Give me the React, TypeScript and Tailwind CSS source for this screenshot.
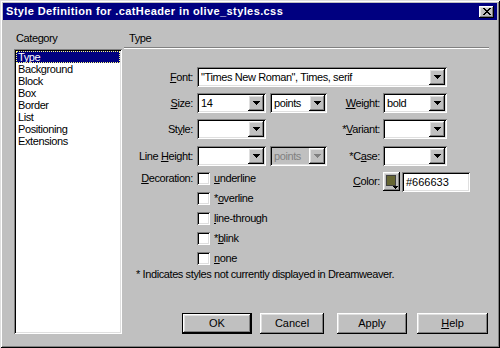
import type { ReactNode } from "react";

const sunken =
  "shadow-[inset_1px_1px_0_#808080,inset_-1px_-1px_0_#ffffff,inset_2px_2px_0_#000000,inset_-2px_-2px_0_#dfdfdf]";
const raised =
  "shadow-[inset_-1px_-1px_0_#000000,inset_1px_1px_0_#ffffff,inset_-2px_-2px_0_#808080,inset_2px_2px_0_#dfdfdf]";

function Arrow({ disabled }: { disabled?: boolean }) {
  const c = disabled ? "#808080" : "#000000";
  return (
    <svg width="7" height="4" viewBox="0 0 7 4" shapeRendering="crispEdges">
      <rect x="0" y="0" width="7" height="1" fill={c} />
      <rect x="1" y="1" width="5" height="1" fill={c} />
      <rect x="2" y="2" width="3" height="1" fill={c} />
      <rect x="3" y="3" width="1" height="1" fill={c} />
    </svg>
  );
}

// underlined access key
function U({ children }: { children: ReactNode }) {
  return <span className="underline underline-offset-[1px]">{children}</span>;
}

function Select({
  value,
  className,
  disabled,
}: {
  value?: string;
  className: string;
  disabled?: boolean;
}) {
  return (
    <div
      className={`flex h-[20px] p-[2px] ${disabled ? "bg-[#c0c0c0]" : "bg-white"} ${sunken} ${className}`}
    >
      <span
        className={`flex-1 pl-[2px] leading-[16px] whitespace-nowrap overflow-hidden ${disabled ? "text-[#808080]" : "text-black"}`}
      >
        {value}
      </span>
      <span
        className={`w-[16px] h-[16px] flex items-center justify-center bg-[#c0c0c0] ${raised}`}
      >
        <Arrow disabled={disabled} />
      </span>
    </div>
  );
}

function Label({ children, className }: { children: ReactNode; className: string }) {
  return (
    <div className={`text-right leading-[20px] whitespace-nowrap ${className}`}>{children}</div>
  );
}

function Check({ children }: { children: ReactNode }) {
  return (
    <div className="flex items-center h-[13px]">
      <span className={`w-[13px] h-[13px] bg-white ${sunken}`} />
      <span className="ml-[4px] leading-[13px]">{children}</span>
    </div>
  );
}

function Button({ children, className, isDefault }: { children: ReactNode; className: string; isDefault?: boolean }) {
  return (
    <div className={`h-[21px] ${isDefault ? "border border-black" : ""} ${className}`}>
      <div className={`h-full flex items-center justify-center bg-[#c0c0c0] ${raised}`}>
        {children}
      </div>
    </div>
  );
}

const categories = [
  "Type",
  "Background",
  "Block",
  "Box",
  "Border",
  "List",
  "Positioning",
  "Extensions",
];

export default function App() {
  return (
    <div className="w-[500px] h-[348px] bg-[#c0c0c0] text-[11px] tracking-[-0.4px] text-black font-['Liberation_Sans',Arial,sans-serif] p-[3px] flex flex-col shadow-[inset_1px_1px_0_#dfdfdf,inset_-1px_-1px_0_#000000,inset_2px_2px_0_#ffffff,inset_-2px_-2px_0_#808080]">
      {/* title bar */}
      <div className="h-[17px] bg-[#000080] flex items-center pl-[3px] pr-[3px]">
        <span className="text-white font-bold text-[11px] tracking-[0.4px] flex-1">
          Style Definition for .catHeader in olive_styles.css
        </span>
        <span className={`w-[15px] h-[12px] bg-[#c0c0c0] flex items-center justify-center ${raised}`}>
          <svg width="8" height="7" viewBox="0 0 8 7" shapeRendering="crispEdges">
            <path d="M0 0h2l2 2.5L6 0h2L5 3.5 8 7H6L4 4.5 2 7H0l3-3.5z" fill="#000" />
          </svg>
        </span>
      </div>

      <div className="flex flex-1">
        {/* category list */}
        <div className="ml-[11px] w-[108px] flex flex-col pt-[12px]">
          <div className="pl-[2px] h-[13px] leading-[13px]">Category</div>
          <div className={`mt-[4px] h-[285px] bg-white p-[2px] ${sunken}`}>
            {categories.map((c, i) => (
              <div
                key={c}
                className={`h-[12px] leading-[12px] pl-[2px] ${i === 0 ? "bg-[#000080] text-white outline-1 outline-dotted outline-[#ffff80] -outline-offset-1" : ""}`}
              >
                {c}
              </div>
            ))}
          </div>
        </div>

        {/* type panel */}
        <div className="ml-[2px] w-[365px] flex flex-col pt-[12px]">
          <div className="pl-[5px] h-[13px] leading-[13px]">Type</div>
          <div className="mt-[2px] h-[2px] border-t border-[#808080] border-b-[1px] border-b-white" />

          <div className="mt-[18px] flex flex-col gap-[6px]">
            <div className="flex gap-[4px]">
              <Label className="w-[69px]">
                <U>F</U>ont:
              </Label>
              <Select className="w-[250px]" value={'"Times New Roman", Times, serif'} />
            </div>

            <div className="flex">
              <Label className="w-[69px]">
                <U>S</U>ize:
              </Label>
              <Select className="ml-[4px] w-[69px]" value="14" />
              <Select className="ml-[4px] w-[57px]" value="points" />
              <Label className="w-[53px]">
                <U>W</U>eight:
              </Label>
              <Select className="ml-[3px] w-[64px]" value="bold" />
            </div>

            <div className="flex">
              <Label className="w-[69px]">
                St<U>y</U>le:
              </Label>
              <Select className="ml-[4px] w-[69px]" />
              <Label className="ml-[4px] w-[110px]">
                *<U>V</U>ariant:
              </Label>
              <Select className="ml-[3px] w-[64px]" />
            </div>

            <div className="flex mt-[1px]">
              <Label className="w-[69px]">
                Line <U>H</U>eight:
              </Label>
              <Select className="ml-[4px] w-[69px]" />
              <Select className="ml-[4px] w-[57px]" value="points" disabled />
              <Label className="w-[53px]">
                *C<U>a</U>se:
              </Label>
              <Select className="ml-[3px] w-[64px]" />
            </div>
          </div>

          <div className="mt-[6px] flex">
            <div className="w-[69px] text-right leading-[13px]">
              <U>D</U>ecoration:
            </div>
            <div className="ml-[4px] w-[130px] flex flex-col gap-[7px]">
              <Check>
                <U>u</U>nderline
              </Check>
              <Check>
                *<U>o</U>verline
              </Check>
              <Check>
                <U>l</U>ine-through
              </Check>
              <Check>
                *<U>b</U>link
              </Check>
              <Check>
                <U>n</U>one
              </Check>
            </div>
            <div className="w-[53px] text-right leading-[19px] whitespace-nowrap">
              <U>C</U>olor:
            </div>
            <div className={`ml-[3px] w-[17px] h-[19px] p-[3px] bg-[#c0c0c0] relative ${raised}`}>
              <div className="w-[10px] h-[11px] bg-[#666633] border border-[#404040]" />
              <div className="absolute right-[2px] bottom-[2px] w-[5px] h-[3px]">
                <svg width="5" height="3" viewBox="0 0 5 3" shapeRendering="crispEdges">
                  <rect x="0" y="0" width="5" height="1" fill="#000" />
                  <rect x="1" y="1" width="3" height="1" fill="#000" />
                  <rect x="2" y="2" width="1" height="1" fill="#000" />
                </svg>
              </div>
            </div>
            <div className={`ml-[2px] w-[68px] h-[20px] bg-white p-[2px] pl-[4px] leading-[16px] tracking-normal ${sunken}`}>
              #666633
            </div>
          </div>

          <div className="mt-[3px] pl-[12px] leading-[13px]">
            * Indicates styles not currently displayed in Dreamweaver.
          </div>

          <div className="mt-[32px] flex tracking-normal">
            <Button className="ml-[58px] w-[70px]" isDefault>
              OK
            </Button>
            <Button className="ml-[8px] w-[64px]">Cancel</Button>
            <Button className="ml-[13px] w-[70px]">Apply</Button>
            <Button className="ml-[10px] w-[71px]">
              <U>H</U>elp
            </Button>
          </div>
        </div>
      </div>
    </div>
  );
}
